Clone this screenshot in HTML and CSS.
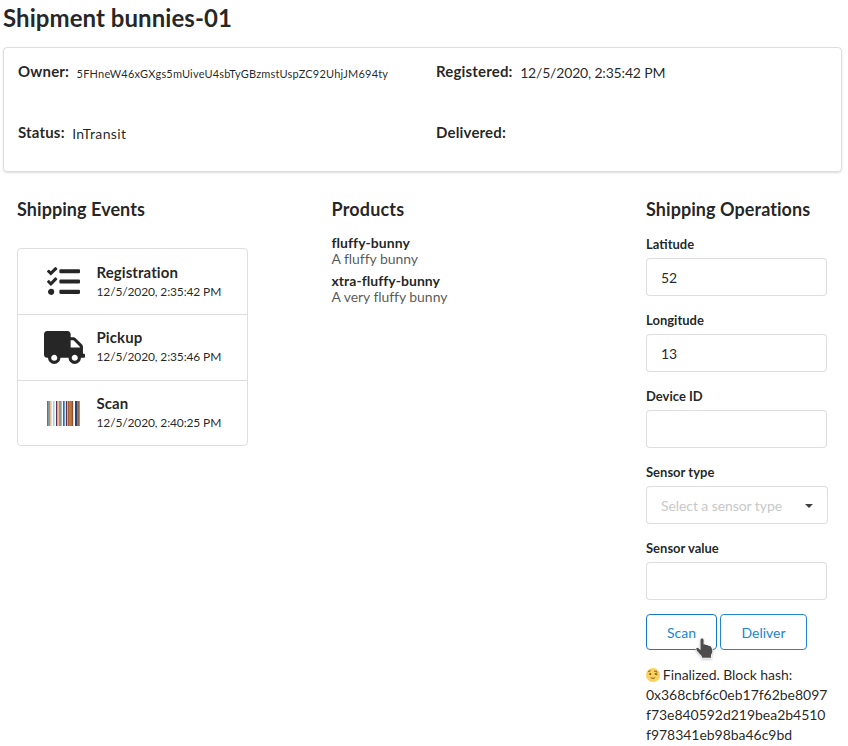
FILE: index.html
```html
<!DOCTYPE html>
<html lang="en">
<head>
<meta charset="utf-8">
<title>Shipment bunnies-01</title>
<link rel="stylesheet" href="styles.css">
</head>
<body>
<main class="page">
  <h1 class="page-title">Shipment bunnies-01</h1>
  <section class="segment">
    <div class="fact"><strong>Owner:</strong><span class="fact-small">5FHneW46xGXgs5mUiveU4sbTyGBzmstUspZC92UhjJM694ty</span></div>
    <div class="fact"><strong>Registered:</strong><span class="fact-date">12/5/2020, 2:35:42 PM</span></div>
    <div class="fact"><strong>Status:</strong><span class="fact-status">InTransit</span></div>
    <div class="fact"><strong>Delivered:</strong></div>
  </section>
  <div class="columns">
    <section>
      <h2>Shipping Events</h2>
      <div class="steps">
        <div class="step">
          <svg class="icon-tasks" viewBox="0 0 512 512"><path d="M139.61 35.5a12 12 0 0 0-17 0L58.93 98.81l-22.7-22.12a12 12 0 0 0-17 0L3.53 92.41a12 12 0 0 0 0 17l47.59 47.4a12.78 12.78 0 0 0 17.61 0l15.59-15.62L156.52 69a12.09 12.09 0 0 0 .09-17zm0 159.19a12 12 0 0 0-17 0l-63.68 63.72-22.7-22.1a12 12 0 0 0-17 0L3.53 252a12 12 0 0 0 0 17L51 316.5a12.77 12.77 0 0 0 17.6 0l15.7-15.69 72.2-72.22a12 12 0 0 0 .09-16.9zM64 368c-26.49 0-48.59 21.5-48.59 48S37.53 464 64 464a48 48 0 0 0 0-96zm432 16H208a16 16 0 0 0-16 16v32a16 16 0 0 0 16 16h288a16 16 0 0 0 16-16v-32a16 16 0 0 0-16-16zm0-320H208a16 16 0 0 0-16 16v32a16 16 0 0 0 16 16h288a16 16 0 0 0 16-16V80a16 16 0 0 0-16-16zm0 160H208a16 16 0 0 0-16 16v32a16 16 0 0 0 16 16h288a16 16 0 0 0 16-16v-32a16 16 0 0 0-16-16z"/></svg>
          <div class="step-text"><div class="step-title">Registration</div><div class="step-time">12/5/2020, 2:35:42 PM</div></div>
        </div>
        <div class="step">
          <svg class="icon-truck" viewBox="0 0 640 512"><path d="M624 352h-16V243.9c0-12.7-5.1-24.9-14.1-33.9L494 110.1c-9-9-21.2-14.1-33.9-14.1H416V48c0-26.5-21.5-48-48-48H48C21.5 0 0 21.5 0 48v320c0 26.5 21.5 48 48 48h16c0 53 43 96 96 96s96-43 96-96h128c0 53 43 96 96 96s96-43 96-96h48c8.8 0 16-7.2 16-16v-32c0-8.8-7.2-16-16-16zM160 464c-26.5 0-48-21.5-48-48s21.5-48 48-48 48 21.5 48 48-21.5 48-48 48zm320 0c-26.5 0-48-21.5-48-48s21.5-48 48-48 48 21.5 48 48-21.5 48-48 48zm80-208H416V144h44.1l99.9 99.9V256z"/></svg>
          <div class="step-text"><div class="step-title">Pickup</div><div class="step-time">12/5/2020, 2:35:46 PM</div></div>
        </div>
        <div class="step">
          <svg class="icon-barcode" viewBox="0 0 33 25" shape-rendering="crispEdges">
            <path fill="#986735" d="M0 0h1v25H0zM21 0h1v25h-1zM31 0h1v25h-1z"/>
            <path fill="#7d9b9e" d="M1 0h1v25H1zM13 0h1v25h-1zM32 0h1v25h-1z"/>
            <path fill="#65a2cd" d="M2 0h1v25H2zM12 0h1v25h-1zM17 0h1v25h-1z"/>
            <path fill="#f3bb91" d="M3 0h1v25H3zM6 0h1v25H6zM11 0h1v25h-1z"/>
            <path fill="#bdeaff" d="M4 0h1v25H4zM7 0h1v25H7zM18 0h1v25h-1zM26 0h1v25h-1z"/>
            <path fill="#672d43" d="M9 0h1v25H9zM19 0h1v25h-1zM28 0h1v25h-1z"/>
            <path fill="#b4b3bd" d="M10 0h1v25h-1zM14 0h1v25h-1zM20 0h1v25h-1z"/>
            <path fill="#8b512f" d="M16 0h1v25h-1zM25 0h1v25h-1z"/>
            <path fill="#c87442" d="M22 0h2v25h-2z"/>
            <path fill="#708190" d="M24 0h1v25h-1zM30 0h1v25h-1z"/>
            <path fill="#263f80" d="M29 0h1v25h-1z"/>
          </svg>
          <div class="step-text"><div class="step-title">Scan</div><div class="step-time">12/5/2020, 2:40:25 PM</div></div>
        </div>
      </div>
    </section>
    <section>
      <h2>Products</h2>
      <div class="product"><strong>fluffy-bunny</strong><span>A fluffy bunny</span></div>
      <div class="product"><strong>xtra-fluffy-bunny</strong><span>A very fluffy bunny</span></div>
    </section>
    <section>
      <h2>Shipping Operations</h2>
      <form class="form">
        <label>Latitude<input type="text" value="52"></label>
        <label>Longitude<input type="text" value="13"></label>
        <label>Device ID<input type="text"></label>
        <div class="field">Sensor type<div class="dropdown"><span>Select a sensor type</span><svg class="caret" viewBox="0 0 8 4"><path d="M0 0h8L4 4z"/></svg></div></div>
        <label>Sensor value<input type="text"></label>
        <div class="buttons">
          <button type="button" class="hovered">Scan<svg class="pointer" viewBox="0 0 20 24"><path d="M7 1.6c1 0 1.6.6 1.6 1.7v4.2l1.2-.3 1 .8 1.6-.1 1 .9 1.5.1 1.5 1-.1 1.1 1 .9v3.4l-1.3 2.7v2.7H7.1l-.4-1.8-4.8-5.2-.9-2.3 1.8-.6 2.7 2.2V3.3c0-1.1.6-1.7 1.5-1.7z"/></svg></button><button type="button">Deliver</button>
        </div>
      </form>
      <div class="status"><svg class="emoji" viewBox="0 0 14 14"><circle cx="7" cy="7" r="7" fill="#fcd05a"/><g fill="none" stroke="#69512c" stroke-linecap="round"><path stroke-width="1.8" d="M4.2 5.8v.4"/><path stroke-width=".9" d="M2.5 3.4l1.8-.5M8.4 3.2l2.2.2M11 4.9L8.8 6l2.3.8M5 9.8c1 .8 2.8.8 3.8 0"/></g></svg> Finalized. Block hash: <span class="hash">0x368cbf6c0eb17f62be8097<wbr>f73e840592d219bea2b4510<wbr>f978341eb98ba46c9bd</span></div>
    </section>
  </div>
</main>
</body>
</html>
```
FILE: styles.css
```css
* { box-sizing: border-box; }
body {
  margin: 0;
  background: #fff;
  color: rgba(0, 0, 0, .87);
  font: 14px/20px Lato, "Liberation Sans", sans-serif;
}
.page { width: 848px; height: 746px; padding: 3px 6px 0 3px; overflow: hidden; }
h1, h2 { margin: 0; font-weight: 700; letter-spacing: .06px; }
.page-title { font-size: 24px; line-height: 30px; }
.segment {
  display: grid;
  grid-template-columns: 418px 1fr;
  grid-auto-rows: 61px;
  height: 125px;
  margin-top: 14px;
  padding: 13px 14px 14px;
  border: 1px solid rgba(34, 36, 38, .15);
  border-radius: 4px;
  box-shadow: 0 1px 2px rgba(34, 36, 38, .15);
}
.fact strong { font-size: 15px; margin-right: 7.5px; letter-spacing: .17px; }
.fact span { position: relative; top: 1px; }
.fact .fact-small { font-size: 11px; letter-spacing: .19px; }
.fact-date { letter-spacing: -.18px; }
.fact-status { letter-spacing: .38px; }
.columns {
  display: grid;
  grid-template-columns: 231px 182px 182px;
  column-gap: 83.5px;
  justify-content: start;
  padding: 26px 0 0 14px;
}
.columns > section:nth-child(3) { margin-left: 49px; width: 182px; }
h2 { font-size: 18px; line-height: 23px; white-space: nowrap; }
.columns > section:nth-child(2) h2 { letter-spacing: .16px; }
.steps {
  height: 198px;
  margin-top: 27px;
  border: 1px solid rgba(34, 36, 38, .15);
  border-radius: 4px;
}
.step {
  display: grid;
  grid-template-columns: 41px 1fr;
  column-gap: 12px;
  align-items: center;
  height: 65px;
  padding-left: 26px;
}
.step + .step { height: 66px; border-top: 1px solid rgba(34, 36, 38, .15); }
.step svg { fill: #262626; }
.icon-tasks { width: 33px; height: 33px; margin-left: 3px; }
.icon-truck { width: 41px; height: 33px; }
.icon-barcode { width: 33px; height: 25px; margin-left: 3px; }
.step-title { font-size: 15px; font-weight: 700; line-height: 19px; letter-spacing: .08px; margin-left: -.5px; }
.step-time { font-size: 12px; line-height: 20px; letter-spacing: -.14px; margin-left: -.5px; }
.step:first-child .step-text { padding-top: 2px; }
.product { display: grid; line-height: 16px; margin-bottom: 6px; }
h2 + .product { margin-top: 14px; }
.product strong { letter-spacing: .04px; }
.product span { color: rgba(0, 0, 0, .68); letter-spacing: -.05px; }
.form { margin-top: 14px; }
.form label, .field {
  display: block;
  height: 62px;
  margin-bottom: 14px;
  font-size: 13px;
  font-weight: 700;
  line-height: 18px;
}
.form input, .dropdown {
  display: block;
  width: 181px;
  height: 38px;
  margin: 5px 0 0;
  padding: 1px 14px 0;
  border: 1px solid rgba(34, 36, 38, .15);
  border-radius: 4px;
  background: #fff;
  color: rgba(0, 0, 0, .87);
  font: 14px Lato, sans-serif;
}
.dropdown {
  display: flex;
  align-items: center;
  justify-content: space-between;
  width: 182px;
  color: #c8c8c8;
  letter-spacing: -.08px;
}
.caret { width: 8px; height: 4px; fill: #404040; }
.form label:nth-of-type(4) { margin-bottom: 13px; }
.buttons { display: flex; gap: 3px; }
.buttons button {
  position: relative;
  width: 87px;
  height: 36px;
  padding: 1px 0 0;
  border: 1px solid #2185d0;
  border-radius: 4px;
  background: #fff;
  color: #2185d0;
  font: 14px Lato, sans-serif;
}
.buttons .hovered { width: 71px; border-color: #1678c2; }
.pointer {
  position: absolute;
  left: 48px;
  top: 22px;
  z-index: 1;
  width: 20px;
  height: 24px;
  overflow: visible;
  fill: #4c4c4c;
  stroke: #fff;
  stroke-width: 1.4px;
  paint-order: stroke;
  filter: drop-shadow(0 1px 1px rgba(0, 0, 0, .25));
}
.status { width: 185px; margin-top: 15px; letter-spacing: -.06px; }
.hash { display: block; letter-spacing: -.03px; }
.emoji { width: 14px; height: 14px; margin-right: -.7px; vertical-align: -2px; }
```
